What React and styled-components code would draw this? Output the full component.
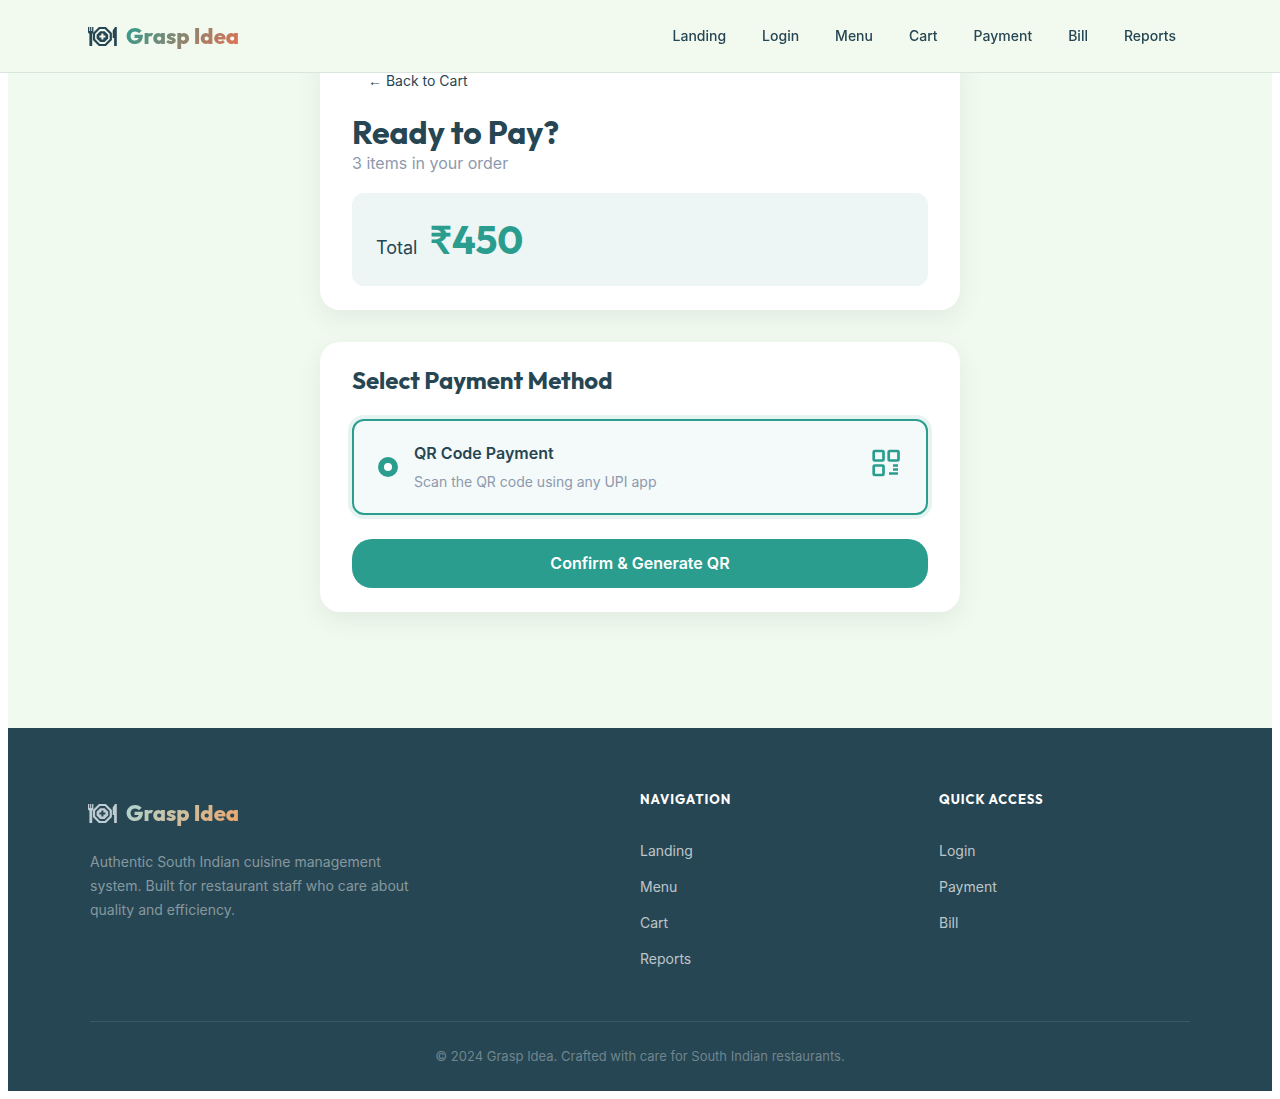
import React from 'react';
import styled, { createGlobalStyle } from 'styled-components';

const display = '"Outfit", "Lato", "Noto Sans", sans-serif';

const GlobalStyle = createGlobalStyle`
  *, *::before, *::after { box-sizing: border-box; }
  body {
    margin: 8px;
    background: #fff;
    color: #264653;
    font-family: "Inter", "Liberation Sans", sans-serif;
    font-size: 16px;
    -webkit-font-smoothing: antialiased;
  }
  h1, h2, h3, p, ul { margin: 0; padding: 0; }
  a { color: inherit; text-decoration: none; }
`;

const Header = styled.header`
  position: fixed;
  top: 0;
  left: 0;
  right: 0;
  z-index: 10;
  background: rgba(241, 250, 238, 0.95);
  backdrop-filter: blur(12px);
  border-bottom: 1px solid rgba(38, 70, 83, 0.12);
`;

const Container = styled.div`
  max-width: 1100px;
  margin: 0 auto;
`;

const HeaderRow = styled(Container)`
  height: 72px;
  display: flex;
  align-items: center;
  justify-content: space-between;
`;

const Brand = styled.a`
  display: flex;
  align-items: center;
  gap: 8px;
  width: max-content;
  color: ${({ $dark }) => ($dark ? '#becbd0' : '#264653')};
  font-size: 22px;
  line-height: ${({ $dark }) => ($dark ? 42 : 28)}px;
`;

const BrandIcon = styled.svg`
  width: 30px;
  height: 20px;
  margin-left: -2px;
`;

const BrandName = styled.span`
  font-family: ${display};
  font-weight: 800;
  background: ${({ $dark }) => ($dark
    ? 'linear-gradient(135deg, #a8dadc, #f4a261)'
    : 'linear-gradient(135deg, #2a9d8f, #e76f51)')};
  background-clip: text;
  -webkit-background-clip: text;
  color: transparent;
`;

const Nav = styled.nav`
  display: flex;
  gap: 8px;
`;

const NavLink = styled.a`
  padding: 8px 14px;
  font-size: 14px;
  line-height: 20px;
  font-weight: 500;
`;

const Main = styled.main`
  min-height: 720px;
  padding: 32px 24px 116px;
  background: #f1faee;
`;

const Stack = styled.div`
  max-width: 640px;
  margin: 0 auto;
  display: flex;
  flex-direction: column;
  gap: 32px;
`;

const Card = styled.section`
  padding: 24px 32px;
  background: #fff;
  border-radius: 20px;
  box-shadow: 0 8px 24px rgba(38, 70, 83, 0.08);
`;

const BackButton = styled.button`
  display: block;
  padding: 8px 16px;
  margin-bottom: 16px;
  border: 0;
  background: transparent;
  color: #264653;
  font: 400 14px/18px "Inter", sans-serif;
`;

const Arrow = styled.span`
  font-family: "Liberation Sans", sans-serif;
`;

const Title = styled.h1`
  font: 700 32px/37px ${display};
`;

const Muted = styled.p`
  color: #8d99ae;
  font-size: ${({ $small }) => ($small ? 14 : 16)}px;
  line-height: ${({ $small }) => ($small ? 22 : 24)}px;
`;

const TotalBox = styled.div`
  display: flex;
  align-items: baseline;
  gap: 12px;
  margin-top: 18px;
  padding: 20px 24px;
  border-radius: 12px;
  background: #edf6f5;
`;

const TotalLabel = styled.span`
  font-size: 18px;
`;

const Amount = styled.strong`
  color: #2a9d8f;
  font: 700 39px/53px ${display};
`;

const SectionTitle = styled.h2`
  font: 700 24px/29px ${display};
`;

const Option = styled.label`
  display: flex;
  align-items: center;
  gap: 16px;
  margin: 24px 0;
  padding: 20px 24px;
  border: 2px solid #2a9d8f;
  border-radius: 12px;
  background: #f4faf9;
  box-shadow: 0 0 0 4px rgba(42, 157, 143, 0.12);
`;

const Radio = styled.input`
  appearance: none;
  flex: none;
  width: 20px;
  height: 20px;
  margin: 0;
  border: 6px solid #2a9d8f;
  border-radius: 50%;
  background: #fff;
`;

const OptionText = styled.div`
  flex: 1;
  display: flex;
  flex-direction: column;
  gap: 6px;
`;

const OptionName = styled.span`
  font-size: 16px;
  line-height: 24px;
  font-weight: 600;
`;

const QrIcon = styled.svg`
  width: 32px;
  height: 32px;
  margin-bottom: 8px;
  color: #2a9d8f;
`;

const Confirm = styled.button`
  width: 100%;
  padding: 14px 24px;
  border: 0;
  border-radius: 20px;
  background: #2a9d8f;
  color: #fff;
  font: 600 16px/21px "Inter", sans-serif;
`;

const Footer = styled.footer`
  padding: 64px 24px 24px;
  background: #264653;
  color: #fff;
`;

const FooterGrid = styled.div`
  display: grid;
  grid-template-columns: 2fr 1fr 1fr;
  gap: 48px;
  padding-bottom: 50px;
`;

const Blurb = styled.p`
  max-width: 320px;
  margin-top: 16px;
  color: rgba(255, 255, 255, 0.45);
  font-size: 14px;
  line-height: 24px;
`;

const ColumnTitle = styled.h3`
  font: 700 13px/14px ${display};
  letter-spacing: 1px;
  text-transform: uppercase;
`;

const Links = styled.ul`
  list-style: none;
  margin-top: 33px;
  display: flex;
  flex-direction: column;
  gap: 12px;
  color: rgba(255, 255, 255, 0.7);
  font-size: 14px;
  line-height: 24px;
`;

const Copyright = styled.p`
  padding-top: 24px;
  border-top: 1px solid rgba(255, 255, 255, 0.1);
  color: rgba(255, 255, 255, 0.35);
  font-size: 13px;
  line-height: 21px;
  text-align: center;
`;

function Logo({ dark }) {
  return (
    <Brand href="#" $dark={dark}>
      <BrandIcon viewBox="0 0 30 20" fill="none" stroke="currentColor" aria-hidden="true">
        <g fill="currentColor" stroke="none">
          <path d="M0 1h1.300v4h.8V1h1.200v4h.8V1h1.300v5.500L4.200 8v12H1.400V8L0 6.500z" />
          <path d="M28.800 1v19h-2.700v-8h-1.400V4.500L27 1z" />
          <path
            fillRule="evenodd"
            d="M12.200 5.200h4.400l3.600 3.600v3.600l-3.600 3.600h-4.400l-3.600-3.600V8.800zM13.400 7.600v2h-2v2h2v2h2v-2h2v-2h-2v-2z"
          />
        </g>
        <path d="M11.400 2h6l5.400 5.400v6.200L17.400 19h-6L6 13.600V7.400z" strokeWidth="2.200" />
      </BrandIcon>
      <BrandName $dark={dark}>Grasp Idea</BrandName>
    </Brand>
  );
}

function LinkColumn({ title, items }) {
  return (
    <nav aria-label={title}>
      <ColumnTitle>{title}</ColumnTitle>
      <Links>
        {items.map((item) => <li key={item}><a href="#">{item}</a></li>)}
      </Links>
    </nav>
  );
}

export default function App() {
  return (
    <>
      <GlobalStyle />
      <Header>
        <HeaderRow>
          <Logo />
          <Nav>
            {['Landing', 'Login', 'Menu', 'Cart', 'Payment', 'Bill', 'Reports'].map((item) => (
              <NavLink key={item} href="#">{item}</NavLink>
            ))}
          </Nav>
        </HeaderRow>
      </Header>
      <Main>
        <Stack>
          <Card>
            <BackButton type="button"><Arrow>←</Arrow> Back to Cart</BackButton>
            <Title>Ready to Pay?</Title>
            <Muted>3 items in your order</Muted>
            <TotalBox>
              <TotalLabel>Total</TotalLabel>
              <Amount>₹450</Amount>
            </TotalBox>
          </Card>
          <Card>
            <SectionTitle>Select Payment Method</SectionTitle>
            <Option htmlFor="qr">
              <Radio id="qr" type="radio" name="method" defaultChecked />
              <OptionText>
                <OptionName>QR Code Payment</OptionName>
                <Muted as="span" $small>Scan the QR code using any UPI app</Muted>
              </OptionText>
              <QrIcon viewBox="0 0 32 32" fill="none" stroke="currentColor" strokeWidth="2.7">
                <rect x="3.700" y="4" width="9.800" height="9.500" rx="1" />
                <rect x="18.700" y="4" width="9.800" height="9.500" rx="1" />
                <rect x="3.700" y="18.500" width="9.800" height="9.500" rx="1" />
                <path d="M23 18.500h5M23 22.500h5M19 26.500h9" strokeWidth="2.400" />
              </QrIcon>
            </Option>
            <Confirm type="button">Confirm &amp; Generate QR</Confirm>
          </Card>
        </Stack>
      </Main>
      <Footer>
        <Container>
          <FooterGrid>
            <div>
              <Logo dark />
              <Blurb>
                Authentic South Indian cuisine management system. Built for restaurant staff who care about quality and efficiency.
              </Blurb>
            </div>
            <LinkColumn title="Navigation" items={['Landing', 'Menu', 'Cart', 'Reports']} />
            <LinkColumn title="Quick Access" items={['Login', 'Payment', 'Bill']} />
          </FooterGrid>
          <Copyright>© 2024 Grasp Idea. Crafted with care for South Indian restaurants.</Copyright>
        </Container>
      </Footer>
    </>
  );
}
